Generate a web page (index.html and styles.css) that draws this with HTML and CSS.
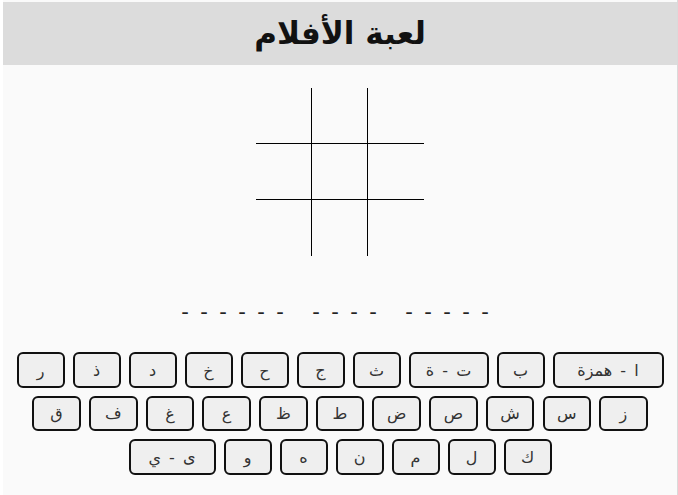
FILE: index.html
```html
<!DOCTYPE html>
<html lang="ar" dir="rtl">
<head>
<meta charset="utf-8">
<title>لعبة الأفلام</title>
<link rel="stylesheet" href="styles.css">
</head>
<body>
<div class="page">
  <header class="header"><h1 class="title">لعبة الأفلام</h1></header>
  <div class="board">
    <div class="cell"></div><div class="cell"></div><div class="cell"></div>
    <div class="cell"></div><div class="cell"></div><div class="cell"></div>
    <div class="cell"></div><div class="cell"></div><div class="cell"></div>
  </div>
  <div class="answer">
    <div class="word"><span>-</span><span>-</span><span>-</span><span>-</span><span>-</span></div>
    <div class="word"><span>-</span><span>-</span><span>-</span><span>-</span></div>
    <div class="word"><span>-</span><span>-</span><span>-</span><span>-</span><span>-</span><span>-</span></div>
  </div>
  <div class="keyboard">
    <div class="row">
      <button class="key key-xl">ا - همزة</button>
      <button class="key">ب</button>
      <button class="key key-wide">ت - ة</button>
      <button class="key">ث</button>
      <button class="key">ج</button>
      <button class="key">ح</button>
      <button class="key">خ</button>
      <button class="key">د</button>
      <button class="key">ذ</button>
      <button class="key">ر</button>
    </div>
    <div class="row row-mid">
      <button class="key">ز</button>
      <button class="key">س</button>
      <button class="key">ش</button>
      <button class="key">ص</button>
      <button class="key">ض</button>
      <button class="key">ط</button>
      <button class="key">ظ</button>
      <button class="key">ع</button>
      <button class="key">غ</button>
      <button class="key">ف</button>
      <button class="key">ق</button>
    </div>
    <div class="row">
      <button class="key">ك</button>
      <button class="key">ل</button>
      <button class="key">م</button>
      <button class="key">ن</button>
      <button class="key">ه</button>
      <button class="key">و</button>
      <button class="key key-ya">ى - ي</button>
    </div>
  </div>
</div>
</body>
</html>
```
FILE: styles.css
```css
html, body {
  margin: 0;
  padding: 0;
  background: #ffffff;
}
body {
  font-family: "DejaVu Sans", "Noto Sans", sans-serif;
  direction: rtl;
}
.page {
  width: 674px;
  height: 493px;
  padding-top: 2px;
  background: #fafafa;
  border-right: 1px solid #dadada;
}
.header {
  height: 63px;
  background: #dcdcdc;
  display: flex;
  align-items: center;
  justify-content: center;
}
.title {
  margin: 0;
  font-size: 31px;
  font-weight: bold;
  color: #111;
  line-height: 1;
}
.board {
  margin: 23px auto 0;
  width: 169px;
  display: grid;
  grid-template-columns: repeat(3, 56px);
  grid-template-rows: repeat(3, 56px);
  direction: ltr;
}
.cell {
  border-color: #000;
  border-style: solid;
  border-width: 0;
}
.cell:nth-child(-n+6) { border-bottom-width: 1.5px; }
.cell:not(:nth-child(3n)) { border-right-width: 1.5px; }
.answer {
  margin-top: 44px;
  display: flex;
  justify-content: center;
  gap: 17px;
  padding-right: 10px;
}
.word {
  display: flex;
}
.word span {
  width: 19px;
  text-align: center;
  font-size: 21px;
  line-height: 24px;
  color: #222;
}
.keyboard {
  margin-top: 28px;
  display: flex;
  flex-direction: column;
  align-items: center;
  gap: 8px;
}
.row {
  display: flex;
  justify-content: center;
  gap: 8px;
}
.row-mid {
  gap: 8.2px;
}
.key {
  box-sizing: border-box;
  flex: none;
  width: 48px;
  height: 36px;
  padding: 0;
  border: 2px solid #111;
  border-radius: 6px;
  background: #efefef;
  color: #333;
  font-family: "DejaVu Sans", sans-serif;
  font-size: 16px;
  letter-spacing: 2px;
  word-spacing: 3px;
}
.row-mid .key {
  width: 48.5px;
  height: 35px;
}
.key-wide { width: 80px; }
.key-xl { width: 111px; }
.key-ya { width: 87px; }
```
